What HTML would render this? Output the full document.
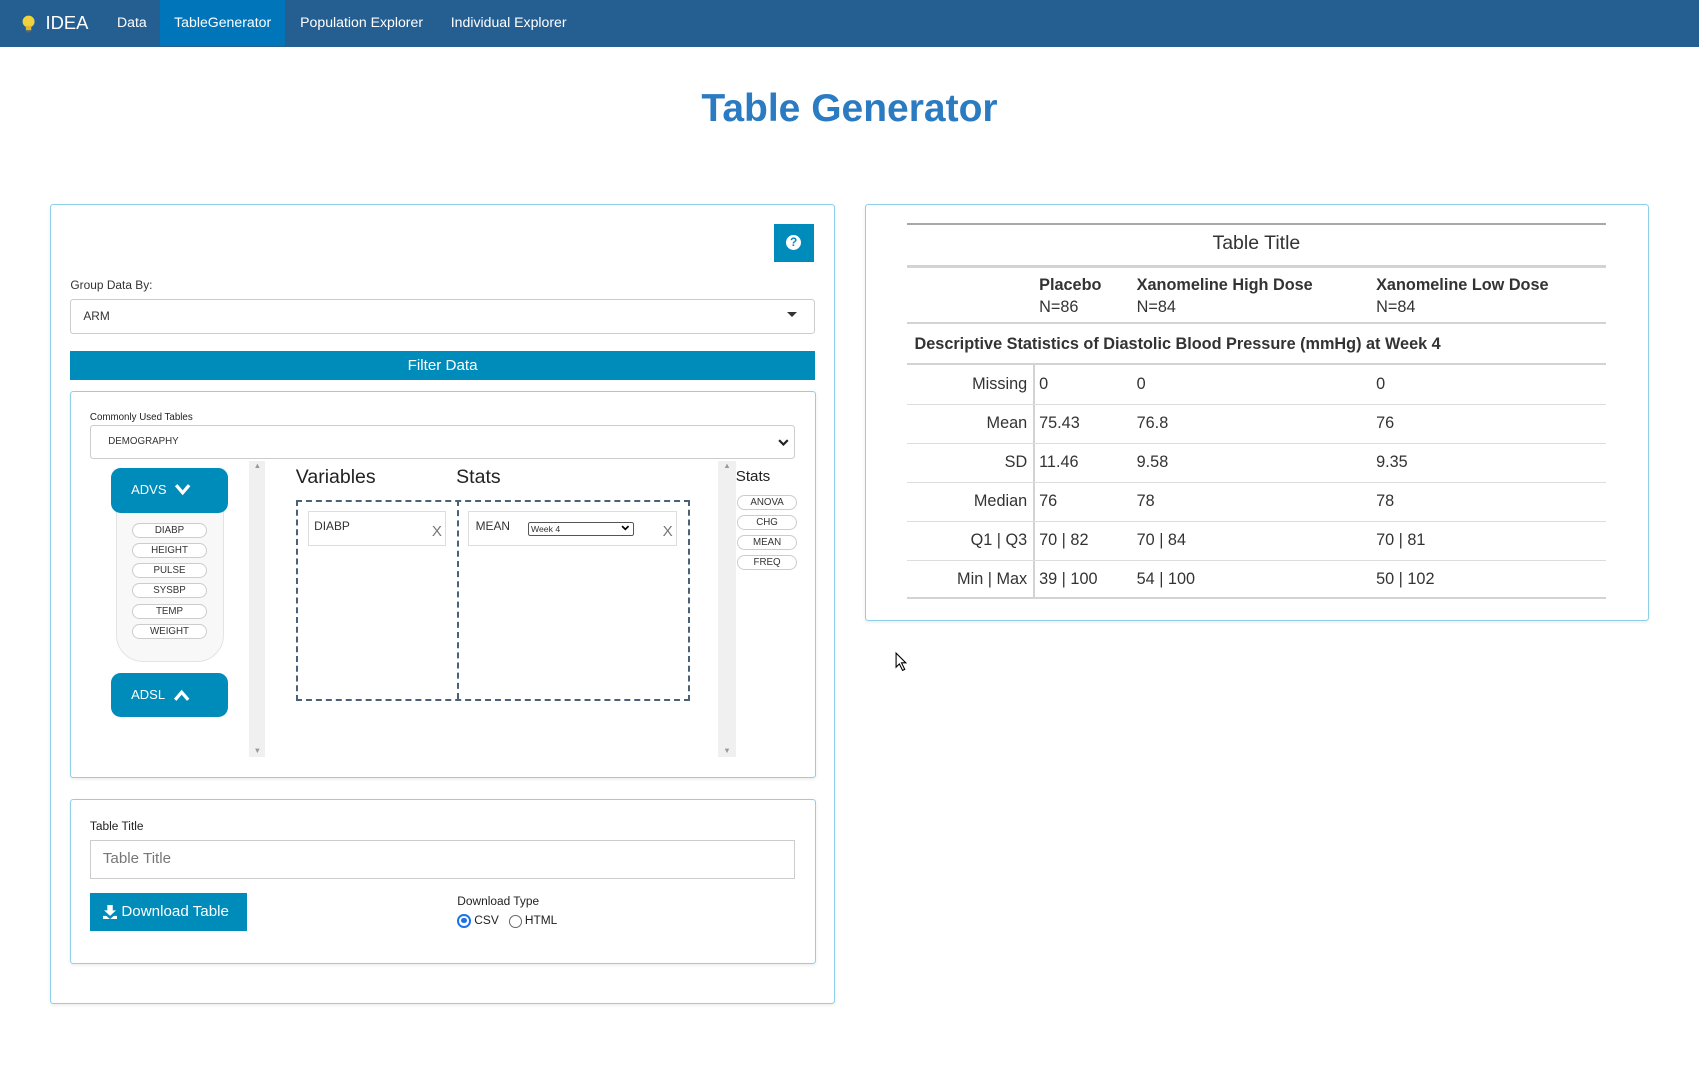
<!DOCTYPE html>
<html><head><meta charset="utf-8"><style>
html{zoom:1.08355}
body{margin:0;width:1568px;height:985px;position:relative;background:#fff;font-family:"Liberation Sans",sans-serif;color:#333;overflow:hidden}
.a{position:absolute}
.nav{left:0;top:0;width:1568px;height:43px;background:#255f91}
.nav span{position:absolute;top:0;line-height:42px;color:#fff;font-size:13px}
.panel{border:1px solid #8fd0e8;border-radius:3px;box-shadow:0 1px 3px rgba(0,0,0,.08);background:#fff}
.pill{border:1px solid #ccc;border-radius:8px;font-size:9px;text-align:center;line-height:12px;background:#fff}
.btn{background:#008cba;color:#fff}
.rule{left:837px;width:645px;height:2px;background:#d3d3d3}
.lbl{font-size:15px;color:#333}
</style></head><body>
<div class="a nav">
  <svg class="a" style="left:19px;top:13px" width="14" height="18" viewBox="0 0 14 18"><circle cx="7" cy="7" r="5.5" fill="#f0d23c"/><rect x="4.5" y="11" width="5" height="4" fill="#e0b830"/><rect x="5" y="15" width="4" height="2" fill="#666"/></svg>
  <span style="left:42px;font-size:17px">IDEA</span>
  <span style="left:108px">Data</span>
  <span style="left:148px;width:115px;height:42px;background:#0075b9;text-align:center">TableGenerator</span>
  <span style="left:277px">Population Explorer</span>
  <span style="left:416px">Individual Explorer</span>
</div>
<div class="a" style="left:0;width:1568px;top:80px;text-align:center;font-size:36px;font-weight:bold;color:#2a7bc1">Table Generator</div>

<!-- left panel -->
<div class="a panel" style="left:46px;top:188px;width:723px;height:737px"></div>
<div class="a btn" style="left:714px;top:207px;width:37px;height:35px;text-align:center"><div style="margin:10px auto;width:14px;height:14px;border-radius:50%;background:#fff;color:#008cba;font-size:11px;font-weight:bold;line-height:14px">?</div></div>
<div class="a" style="left:65px;top:257px;font-size:11px">Group Data By:</div>
<div class="a" style="left:65px;top:276px;width:685px;height:30px;border:1px solid #ccc;border-radius:3px;font-size:11px;line-height:30px"><span style="margin-left:11px">ARM</span><span style="position:absolute;right:15px;top:11px;border:5px solid transparent;border-top:5px solid #333;border-bottom:0"></span></div>
<div class="a btn" style="left:65px;top:324px;width:687px;height:27px;text-align:center;line-height:27px;font-size:14px">Filter Data</div>

<div class="a panel" style="left:65px;top:361px;width:686px;height:355px"></div>
<div class="a" style="left:83px;top:380px;font-size:9px;color:#222">Commonly Used Tables</div>
<div class="a" style="left:83px;top:392px;width:649px;height:30px;border:1px solid #ccc;border-radius:3px;font-size:9px;line-height:30px"><span style="margin-left:16px">DEMOGRAPHY</span><svg style="position:absolute;right:5px;top:11px" width="10" height="8"><path d="M1 2 L5 6 L9 2" stroke="#222" stroke-width="2" fill="none"/></svg></div>
<div class="a" style="left:230px;top:425px;width:15px;height:274px;background:#f0f0f0;font-size:7px;color:#999;text-align:center">▲<div style="position:absolute;bottom:2px;width:15px">▼</div></div>
<div class="a" style="left:663px;top:425px;width:16px;height:274px;background:#f0f0f0;font-size:7px;color:#999;text-align:center">▲<div style="position:absolute;bottom:2px;width:16px">▼</div></div>

<div class="a" style="left:107px;top:462px;width:98px;height:147px;background:#f8f8f8;border:1px solid #e3e3e3;border-radius:0 0 25px 25px"></div>
<div class="a btn" style="left:102px;top:432px;width:108px;height:41px;border-radius:9px;font-size:12px;line-height:41px"><span style="margin-left:19px">ADVS</span><svg style="position:absolute;left:59px;top:14px" width="16" height="12"><path d="M2 2 L8 9 L14 2" stroke="#fff" stroke-width="3" fill="none"/></svg></div>
<div class="a pill" style="left:122px;top:483px;width:67px">DIABP</div>
<div class="a pill" style="left:122px;top:501.5px;width:67px">HEIGHT</div>
<div class="a pill" style="left:122px;top:520px;width:67px">PULSE</div>
<div class="a pill" style="left:122px;top:538.5px;width:67px">SYSBP</div>
<div class="a pill" style="left:122px;top:557px;width:67px">TEMP</div>
<div class="a pill" style="left:122px;top:575.5px;width:67px">WEIGHT</div>
<div class="a btn" style="left:102px;top:621px;width:108px;height:41px;border-radius:9px;font-size:12px;line-height:41px"><span style="margin-left:19px">ADSL</span><svg style="position:absolute;left:58px;top:15px" width="16" height="12"><path d="M2 10 L8 3 L14 10" stroke="#fff" stroke-width="3" fill="none"/></svg></div>

<div class="a" style="left:273px;top:430px;font-size:18px;color:#222">Variables</div>
<div class="a" style="left:421px;top:430px;font-size:18px;color:#222">Stats</div>
<div class="a" style="left:273px;top:461px;width:360px;height:182px;border:2px dashed #4a6178"></div>
<div class="a" style="left:422px;top:461px;width:0;height:184px;border-left:2px dashed #4a6178"></div>
<div class="a" style="left:284px;top:472px;width:126px;height:30px;border:1px solid #ddd;font-size:11px"><span style="position:absolute;left:5px;top:6px">DIABP</span><span style="position:absolute;right:3px;top:10px;font-size:14px;color:#777">X</span></div>
<div class="a" style="left:432px;top:472px;width:191px;height:30px;border:1px solid #ddd;font-size:11px"><span style="position:absolute;left:6px;top:6px">MEAN</span><div style="position:absolute;left:54px;top:9px;width:96px;height:11px;border:1px solid #555;border-radius:2px;font-size:8px;line-height:12px;overflow:hidden">&nbsp;Week 4<svg style="position:absolute;right:3px;top:2px" width="8" height="6"><path d="M1 1 L4 4 L7 1" stroke="#000" stroke-width="1.6" fill="none"/></svg></div><span style="position:absolute;right:3px;top:10px;font-size:14px;color:#777">X</span></div>
<div class="a" style="left:679px;top:432px;font-size:14px;color:#222">Stats</div>
<div class="a pill" style="left:680px;top:457px;width:54px">ANOVA</div>
<div class="a pill" style="left:680px;top:475.5px;width:54px">CHG</div>
<div class="a pill" style="left:680px;top:494px;width:54px">MEAN</div>
<div class="a pill" style="left:680px;top:512.5px;width:54px">FREQ</div>

<div class="a panel" style="left:65px;top:737px;width:686px;height:151px"></div>
<div class="a" style="left:83px;top:756px;font-size:11px;color:#222">Table Title</div>
<div class="a" style="left:83px;top:775px;width:649px;height:34px;border:1px solid #ccc;font-size:14px;line-height:34px;color:#777"><span style="margin-left:11px">Table Title</span></div>
<div class="a btn" style="left:83px;top:824px;width:145px;height:35px;font-size:14px;line-height:35px"><svg style="position:absolute;left:12px;top:11px" width="13" height="13"><path d="M4 0h5v5h3l-5.5 5L1 5h3z M0 10h3l3.5 3L10 10h3v3H0z" fill="#fff"/></svg><span style="margin-left:29px">Download Table</span></div>
<div class="a" style="left:422px;top:825px;font-size:11px;color:#222">Download Type</div>
<div class="a" style="left:422px;top:843px;font-size:11px;color:#222;line-height:14px"><span style="display:inline-block;width:9px;height:9px;border-radius:50%;border:2px solid #1a73e8;vertical-align:-3px;position:relative"><span style="position:absolute;left:2px;top:2px;width:5px;height:5px;border-radius:50%;background:#1a73e8"></span></span> CSV &nbsp; <span style="display:inline-block;width:10px;height:10px;border-radius:50%;border:1px solid #666;vertical-align:-3px"></span> HTML</div>

<!-- right panel -->
<div class="a panel" style="left:798px;top:188px;width:722px;height:383px"></div>
<div class="a rule" style="top:206px;background:#a8a8a8"></div>
<div class="a" style="left:837px;width:645px;top:214px;text-align:center;font-size:18px">Table Title</div>
<div class="a rule" style="top:245px"></div>
<div class="a lbl" style="left:959px;top:254px;line-height:20px"><b style="font-weight:600">Placebo</b><br>N=86</div>
<div class="a lbl" style="left:1049px;top:254px;line-height:20px"><b style="font-weight:600">Xanomeline High Dose</b><br>N=84</div>
<div class="a lbl" style="left:1270px;top:254px;line-height:20px"><b style="font-weight:600">Xanomeline Low Dose</b><br>N=84</div>
<div class="a rule" style="top:297px"></div>
<div class="a lbl" style="left:844px;top:309px;font-weight:600">Descriptive Statistics of Diastolic Blood Pressure (mmHg) at Week 4</div>
<div class="a rule" style="top:335px"></div>
<div class="a" style="left:953px;top:337px;width:2px;height:215px;background:#d3d3d3"></div>
<div class="a" style="left:837px;top:337px;width:645px;font-size:15px">
<table style="border-collapse:collapse;width:645px;table-layout:fixed">
<colgroup><col style="width:117px"><col style="width:95px"><col style="width:221px"><col></colgroup>
<tr style="height:36px;border-bottom:1px solid #ddd"><td style="text-align:right;padding:0 6px 0 0">Missing</td><td style="padding:0 0 0 5px">0</td><td style="padding:0">0</td><td style="padding:0">0</td></tr>
<tr style="height:36px;border-bottom:1px solid #ddd"><td style="text-align:right;padding:0 6px 0 0">Mean</td><td style="padding:0 0 0 5px">75.43</td><td style="padding:0">76.8</td><td style="padding:0">76</td></tr>
<tr style="height:36px;border-bottom:1px solid #ddd"><td style="text-align:right;padding:0 6px 0 0">SD</td><td style="padding:0 0 0 5px">11.46</td><td style="padding:0">9.58</td><td style="padding:0">9.35</td></tr>
<tr style="height:36px;border-bottom:1px solid #ddd"><td style="text-align:right;padding:0 6px 0 0">Median</td><td style="padding:0 0 0 5px">76</td><td style="padding:0">78</td><td style="padding:0">78</td></tr>
<tr style="height:36px;border-bottom:1px solid #ddd"><td style="text-align:right;padding:0 6px 0 0">Q1 | Q3</td><td style="padding:0 0 0 5px">70 | 82</td><td style="padding:0">70 | 84</td><td style="padding:0">70 | 81</td></tr>
<tr style="height:35px"><td style="text-align:right;padding:0 6px 0 0">Min | Max</td><td style="padding:0 0 0 5px">39 | 100</td><td style="padding:0">54 | 100</td><td style="padding:0">50 | 102</td></tr>
</table></div>
<div class="a rule" style="top:551px"></div>
<svg class="a" style="left:826px;top:602px" width="12" height="18"><path d="M1 1 L1 14 L4 11 L7 17 L9 16 L6 10 L10 10 Z" fill="#fff" stroke="#000" stroke-width="1"/></svg>
</body></html>
